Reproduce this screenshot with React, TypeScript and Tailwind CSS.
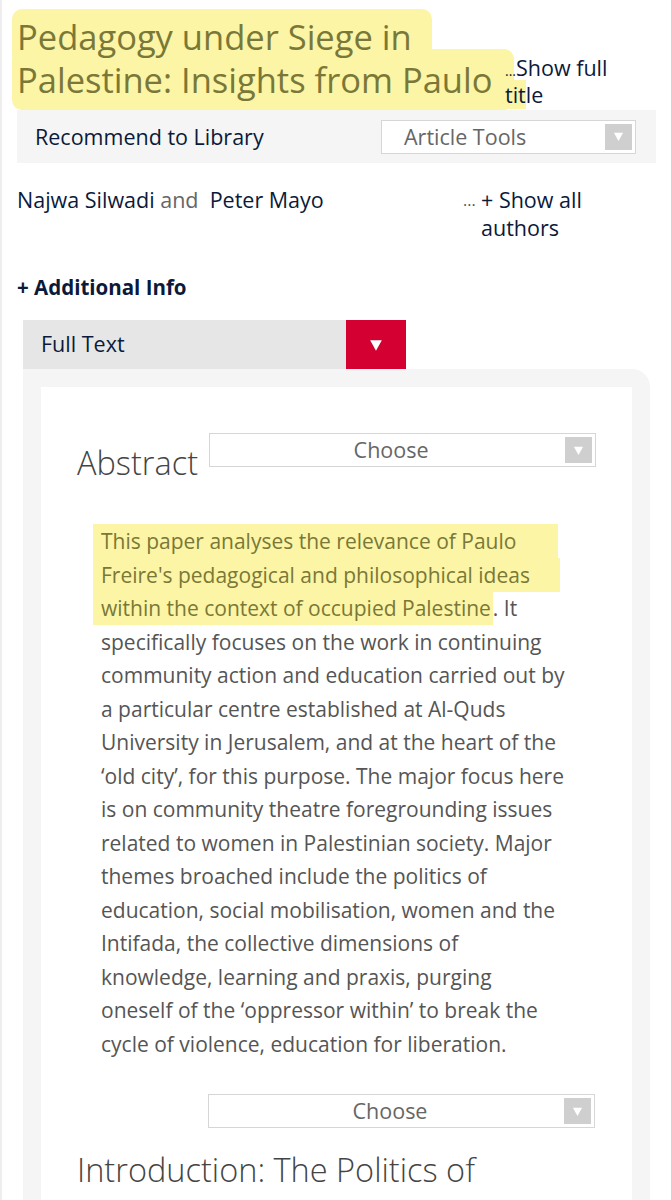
import React from 'react';

const ABSTRACT_HL = [
  { text: 'This paper analyses the relevance of Paulo', pad: 'pr-[42px]' },
  { text: "Freire's pedagogical and philosophical ideas", pad: 'pr-[30px]' },
  { text: 'within the context of occupied Palestine', pad: 'pr-[2px]' },
];

const ABSTRACT_REST = [
  'specifically focuses on the work in continuing',
  'community action and education carried out by',
  'a particular centre established at Al-Quds',
  'University in Jerusalem, and at the heart of the',
  '‘old city’, for this purpose. The major focus here',
  'is on community theatre foregrounding issues',
  'related to women in Palestinian society. Major',
  'themes broached include the politics of',
  'education, social mobilisation, women and the',
  'Intifada, the collective dimensions of',
  'knowledge, learning and praxis, purging',
  'oneself of the ‘oppressor within’ to break the',
  'cycle of violence, education for liberation.',
];

function Arrow({ className }: { className?: string }) {
  return (
    <svg viewBox="0 0 12 12" className={className}>
      <path d="M1 2 L11 2 L6 11 Z" fill="white" />
    </svg>
  );
}

function SelectBox({ label, width, align = 'center' }: { label: string; width: string; align?: 'center' | 'left' }) {
  return (
    <div className={`${width} h-[34px] border border-[#d6d6d6] bg-white flex items-center p-[3px] shrink-0`}>
      <div
        className={`flex-1 text-[21.5px] leading-[28px] text-[#666] ${align === 'center' ? 'text-center pl-[4px]' : 'pl-[19px]'}`}
      >
        {label}
      </div>
      <div className="w-[27px] h-full bg-[#cfcfcf] flex items-center justify-center">
        <Arrow className="w-[11px] h-[11px]" />
      </div>
    </div>
  );
}

export default function App() {
  return (
    <div className="h-[1200px] overflow-hidden bg-white border-l-2 border-[#eeeeee] font-['Open_Sans',sans-serif] text-[#0b1a3b]">
      {/* title */}
      <div className="flex items-start pl-[10px] pt-[15px]">
        <h1 className="w-[493px] whitespace-nowrap text-[34.5px] leading-[43px] text-[#7a7838] font-normal">
          <span className="bg-[#fbf5a5] px-[5px] pr-[20px] py-[4px] rounded-[10px]">
            <span className="relative">Pedagogy under Siege in</span>
          </span>
          <br />
          <span className="bg-[#fbf5a5] px-[5px] pr-[22px] py-[7px] rounded-[10px]">
            <span className="relative">Palestine: Insights from Paulo</span>
          </span>
        </h1>
        <div className="mt-[39px] text-[21.5px] leading-[27px]">
          <span className="text-[14px] leading-none">...</span>Show full
          <br />
          <span className="bg-[#fbf5a5]">tit</span>le
        </div>
      </div>

      {/* tools bar */}
      <div className="mx-[15px] mt-[2px] h-[53px] bg-[#f5f5f5] flex items-center justify-between pl-[18px] pr-[20px]">
        <span className="text-[21.5px] leading-[30px]">Recommend to Library</span>
        <SelectBox label="Article Tools" width="w-[255px]" align="left" />
      </div>

      {/* authors */}
      <div className="flex pl-[15px] mt-[23px] text-[21.5px] leading-[28px]">
        <div className="w-[446px]">
          Najwa Silwadi <span className="text-[#666]">and</span>&nbsp; Peter Mayo
        </div>
        <div className="flex">
          <span className="text-[16px] text-[#555] w-[18px] leading-[28px]">...</span>
          <span>
            + Show all
            <br />
            authors
          </span>
        </div>
      </div>

      <div className="pl-[15px] mt-[27px] text-[20.5px] leading-[36px] font-bold">+ Additional Info</div>

      {/* full text tab */}
      <div className="ml-[21px] mt-[15px] flex h-[49px] w-[383px]">
        <div className="flex-1 bg-[#e6e6e6] flex items-center pl-[18px] text-[21.5px]">Full Text</div>
        <div className="w-[60px] bg-[#d30031] flex items-center justify-center">
          <Arrow className="w-[14px] h-[14px]" />
        </div>
      </div>

      {/* panel */}
      <div className="ml-[21px] w-[627px] bg-[#f5f5f5] rounded-tr-[18px] pt-[18px] px-[18px]">
        <div className="bg-white pl-[36px] pb-[40px]">
          <div className="flex items-start pt-[46px]">
            <h2 className="mt-[5px] mr-[11px] text-[32.5px] leading-[50px] font-light text-[#444]">Abstract</h2>
            <SelectBox label="Choose" width="w-[387px]" />
          </div>

          <div className="pl-[24px] mt-[37px] text-[21px] leading-[33.5px] text-[#555] whitespace-nowrap">
            {ABSTRACT_HL.map((line, i) => (
              <div key={i}>
                <span className={`bg-[#fbf5a5] text-[#7a7838] pl-[8px] -ml-[8px] py-[3px] ${line.pad}`}>
                  <span className="relative">{line.text}</span>
                </span>
                {i === ABSTRACT_HL.length - 1 && '. It'}
              </div>
            ))}
            {ABSTRACT_REST.map((line, i) => (
              <div key={i}>{line}</div>
            ))}
          </div>

          <div className="pl-[131px] mt-[33px]">
            <SelectBox label="Choose" width="w-[387px]" />
          </div>

          <h2 className="mt-[17px] text-[32.5px] leading-[50px] font-light text-[#444]">Introduction: The Politics of</h2>
        </div>
      </div>
    </div>
  );
}
